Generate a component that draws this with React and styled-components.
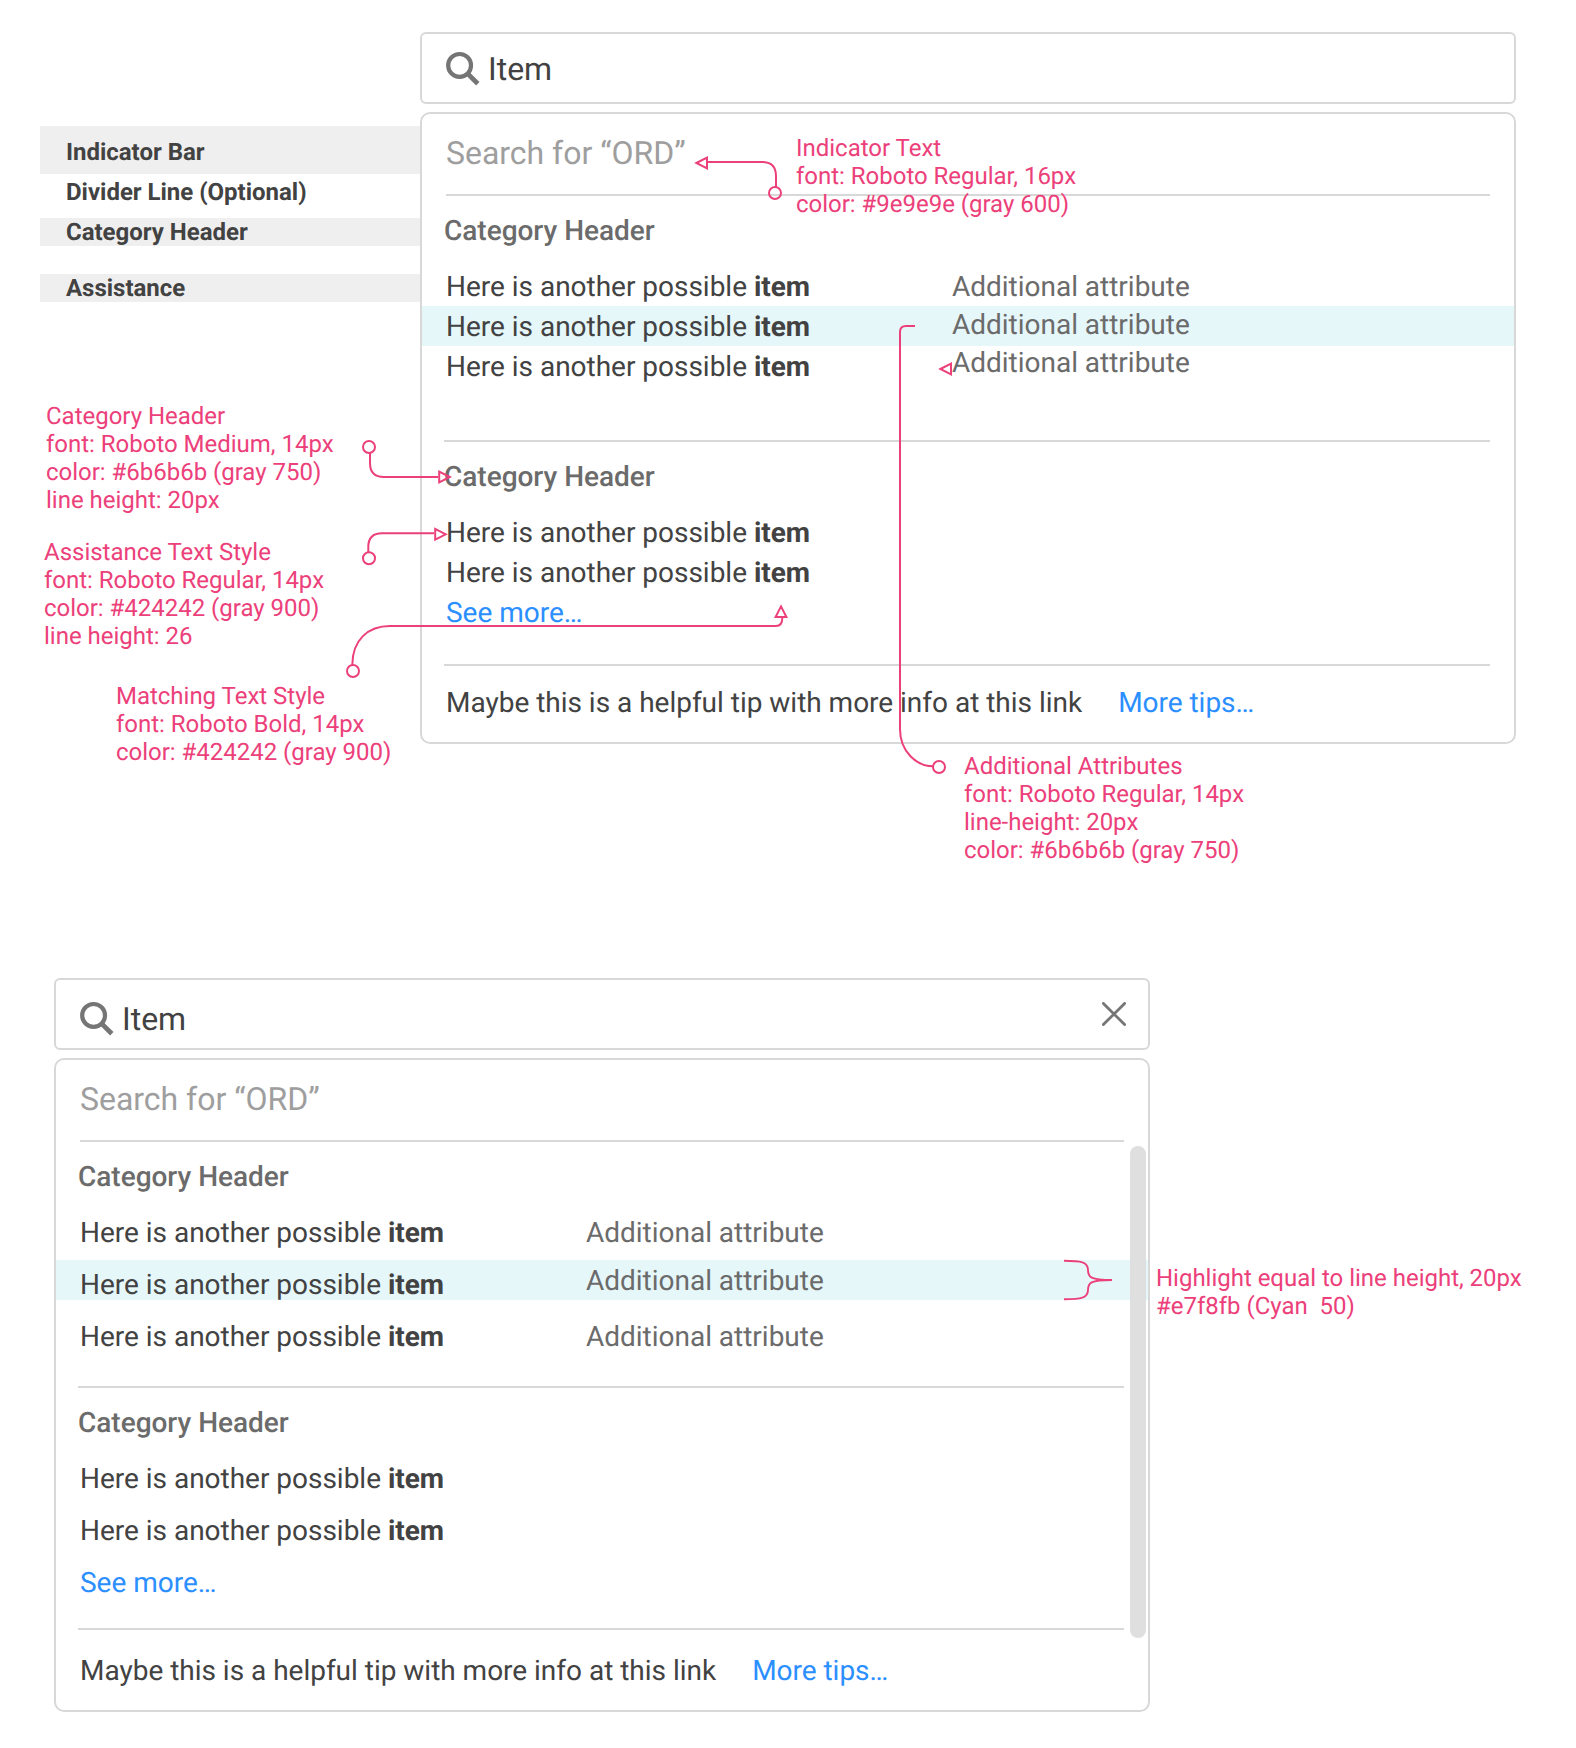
import React from "react";
import styled, { createGlobalStyle } from "styled-components";

const PINK = "#ec407a";

const GlobalStyle = createGlobalStyle`
  body {
    margin: 0;
    background: #fff;
    font-family: Roboto, "Liberation Sans", sans-serif;
    color: #424242;
    letter-spacing: -0.016px;
    text-rendering: geometricPrecision;
  }
  *, *::before, *::after { box-sizing: border-box; }
`;

const Page = styled.main`
  position: relative;
  width: 1576px;
  height: 1748px;
  overflow: hidden;
  display: flex;
  flex-direction: column;
  gap: 234px;
  padding-top: 32px;
`;

const AnnotatedSpec = styled.section`
  display: flex;
  padding-left: 40px;
`;

const ScrollSpec = styled.section`
  padding-left: 54px;
`;

const PartLabels = styled.div`
  width: 380px;
  display: flex;
  flex-direction: column;
  padding-top: 94px;
`;

const PartLabel = styled.div`
  height: ${(p) => p.$height}px;
  margin-bottom: ${(p) => p.$after || 0}px;
  padding: ${(p) => p.$top || 0}px 0 0 26px;
  background: ${(p) => (p.$shaded ? "#efefef" : "transparent")};
  font-size: 24px;
  line-height: 28px;
  font-weight: 700;
`;

const Autocomplete = styled.div`
  width: 1096px;
  display: flex;
  flex-direction: column;
  gap: 8px;
`;

const SearchField = styled.div`
  height: 72px;
  display: flex;
  align-items: flex-start;
  border: 2px solid #d8d8d8;
  border-radius: 6px;
  background: #fff;
  padding: ${(p) => (p.$clearable ? 20 : 16)}px 22px 0 24px;
`;

const SearchGlyph = styled.svg`
  width: 36px;
  height: 36px;
  flex: none;
`;

const Query = styled.span`
  flex: 1;
  margin-left: 6px;
  font-size: 32px;
  line-height: 38px;
`;

const ClearButton = styled.button`
  width: 24px;
  height: 24px;
  margin-top: 2px;
  padding: 0;
  border: 0;
  background: none;
  line-height: 0;
`;

const Panel = styled.div`
  position: relative;
  height: ${(p) => p.$height}px;
  border: 2px solid #d8d8d8;
  border-radius: 10px;
  background: #fff;
`;

const Indicator = styled.div`
  height: 80px;
  padding: 20px 24px 0;
  font-size: 32px;
  line-height: 38px;
  color: #9e9e9e;
`;

const Divider = styled.hr`
  height: 2px;
  margin: 0 24px 0 ${(p) => (p.$wide ? 22 : 24)}px;
  border: 0;
  background: #d8d8d8;
`;

const Group = styled.div`
  height: ${(p) => p.$height}px;
  padding-top: 14px;
`;

const GroupTitle = styled.h3`
  margin: 0;
  padding-left: 22px;
  height: 56px;
  font-size: 28px;
  line-height: 42px;
  font-weight: 500;
  color: #6b6b6b;
`;

const Options = styled.div`
  display: flex;
  flex-direction: column;
  gap: ${(p) => p.$gap}px;
`;

const Option = styled.div`
  height: 40px;
  display: flex;
  margin: ${(p) => -(p.$lift || 0)}px 0 ${(p) => p.$lift || 0}px;
  padding-left: 24px;
  font-size: 28px;
  line-height: 42px;
  background: ${(p) => (p.$active ? "#e6f7fa" : "transparent")};

  b { font-weight: 700; }
`;

const OptionText = styled.span`
  width: 506px;
  margin-top: ${(p) => p.$drop || 0}px;
  white-space: nowrap;
`;

const Attribute = styled.span`
  margin-top: ${(p) => p.$offset || 0}px;
  color: #6b6b6b;
`;

const Link = styled.a`
  color: #2c8fff;
`;

const Tip = styled.div`
  display: flex;
  gap: 36px;
  padding: ${(p) => p.$top}px 24px 0;
  font-size: 28px;
  line-height: 42px;
  white-space: nowrap;
`;

const ScrollThumb = styled.div`
  position: absolute;
  top: 86px;
  right: 2px;
  width: 16px;
  height: 492px;
  border-radius: 8px;
  background: #dfdfdf;
`;

const Note = styled.div`
  position: absolute;
  left: ${(p) => p.$x}px;
  top: ${(p) => p.$y}px;
  color: ${PINK};
  font-size: 24px;
  line-height: 28px;
  white-space: pre;
`;

const Connectors = styled.svg`
  position: absolute;
  left: 0;
  top: 0;
  pointer-events: none;
`;

const SearchIcon = () => (
  <SearchGlyph viewBox="0 0 36 36" fill="none" stroke="#757575" strokeWidth="4.2">
    <circle cx="13.6" cy="15.4" r="11.4" />
    <path d="M21.4 23.4 L31.8 33.8" strokeWidth="4.8" />
  </SearchGlyph>
);

const ClearIcon = () => (
  <svg width="24" height="24" fill="none" stroke="#757575" strokeWidth="2.8" strokeLinecap="round">
    <path d="M1.4 1.4 L22.6 22.6 M22.6 1.4 L1.4 22.6" />
  </svg>
);

const Suggestion = ({ active, lift, attribute, offset }) => (
  <Option $active={active} $lift={lift}>
    <OptionText $drop={lift}>
      Here is another possible <b>item</b>
    </OptionText>
    {attribute && <Attribute $offset={offset}>Additional attribute</Attribute>}
  </Option>
);

const HelpfulTip = ({ top }) => (
  <Tip $top={top}>
    <span>Maybe this is a helpful tip with more info at this link</span>
    <Link>More tips…</Link>
  </Tip>
);

const notes = [
  { x: 796, y: 134, text: "Indicator Text\nfont: Roboto Regular, 16px\ncolor: #9e9e9e (gray 600)" },
  { x: 46, y: 402, text: "Category Header\nfont: Roboto Medium, 14px\ncolor: #6b6b6b (gray 750)\nline height: 20px" },
  { x: 44, y: 538, text: "Assistance Text Style\nfont: Roboto Regular, 14px\ncolor: #424242 (gray 900)\nline height: 26" },
  { x: 116, y: 682, text: "Matching Text Style\nfont: Roboto Bold, 14px\ncolor: #424242 (gray 900)" },
  { x: 964, y: 752, text: "Additional Attributes\nfont: Roboto Regular, 14px\nline-height: 20px\ncolor: #6b6b6b (gray 750)" },
  { x: 1156, y: 1264, text: "Highlight equal to line height, 20px\n#e7f8fb (Cyan  50)" },
];

export default function App() {
  return (
    <>
      <GlobalStyle />
      <Page>
        <AnnotatedSpec>
          <PartLabels>
            <PartLabel $shaded $height={48} $top={12} $after={4}>Indicator Bar</PartLabel>
            <PartLabel $height={28} $after={12}>Divider Line (Optional)</PartLabel>
            <PartLabel $shaded $height={28} $after={28}>Category Header</PartLabel>
            <PartLabel $shaded $height={28}>Assistance</PartLabel>
          </PartLabels>
          <Autocomplete>
            <SearchField>
              <SearchIcon />
              <Query>Item</Query>
            </SearchField>
            <Panel $height={632}>
              <Indicator>Search for “ORD”</Indicator>
              <Divider />
              <Group $height={244}>
                <GroupTitle>Category Header</GroupTitle>
                <Options $gap={0}>
                  <Suggestion attribute />
                  <Suggestion active attribute offset={-2} />
                  <Suggestion attribute offset={-4} />
                </Options>
              </Group>
              <Divider $wide />
              <Group $height={222}>
                <GroupTitle>Category Header</GroupTitle>
                <Options $gap={0}>
                  <Suggestion />
                  <Suggestion />
                  <Option><Link>See more…</Link></Option>
                </Options>
              </Group>
              <Divider $wide />
              <HelpfulTip top={16} />
            </Panel>
          </Autocomplete>
        </AnnotatedSpec>

        <ScrollSpec>
          <Autocomplete>
            <SearchField $clearable>
              <SearchIcon />
              <Query>Item</Query>
              <ClearButton aria-label="Clear"><ClearIcon /></ClearButton>
            </SearchField>
            <Panel $height={654}>
              <Indicator>Search for “ORD”</Indicator>
              <Divider />
              <Group $height={244}>
                <GroupTitle>Category Header</GroupTitle>
                <Options $gap={12}>
                  <Suggestion attribute />
                  <Suggestion active lift={4} attribute />
                  <Suggestion attribute />
                </Options>
              </Group>
              <Divider $wide />
              <Group $height={240}>
                <GroupTitle>Category Header</GroupTitle>
                <Options $gap={12}>
                  <Suggestion />
                  <Suggestion />
                  <Option><Link>See more…</Link></Option>
                </Options>
              </Group>
              <Divider $wide />
              <HelpfulTip top={20} />
              <ScrollThumb />
            </Panel>
          </Autocomplete>
        </ScrollSpec>

        <Connectors width="1576" height="1748" fill="none" stroke={PINK} strokeWidth="2">
          <path d="M708 162 H762 Q776 162 776 176 V187" />
          <path d="M696.4 163 L707 157.6 V168.4 Z" />
          <circle cx="775" cy="193" r="6" />

          <path d="M370 453 V463 Q370 477 384 477 H438" />
          <path d="M449.8 477 L439.2 471.6 V482.4 Z" />
          <circle cx="369" cy="447" r="6" />

          <path d="M368.3 552 V547 Q368.3 533.3 382 533.3 H434" />
          <path d="M445.8 534.3 L435.2 528.9 V539.7 Z" />
          <circle cx="369" cy="558.3" r="6" />

          <path d="M352.3 665 C352.3 640 368 626 390 626 H776 Q782.3 626 782.3 618" />
          <path d="M781 606.4 L775.6 617 H786.4 Z" />
          <circle cx="353" cy="671" r="6" />

          <path d="M915 326 H906 Q900 326 900 332 V729 C900 752 917 766.3 933 766.3" />
          <path d="M940.4 369 L951 363.6 V374.4 Z" />
          <circle cx="939" cy="767" r="6" />

          <path
            strokeWidth="1.9"
            d="M1064 1260.8 C1081 1260.8 1088 1262 1088 1270 C1088 1277 1090 1280 1112 1280 C1090 1280 1088 1283 1088 1290 C1088 1298 1081 1299.2 1064 1299.2"
          />
        </Connectors>

        {notes.map((n) => (
          <Note key={n.text} $x={n.x} $y={n.y}>{n.text}</Note>
        ))}
      </Page>
    </>
  );
}
